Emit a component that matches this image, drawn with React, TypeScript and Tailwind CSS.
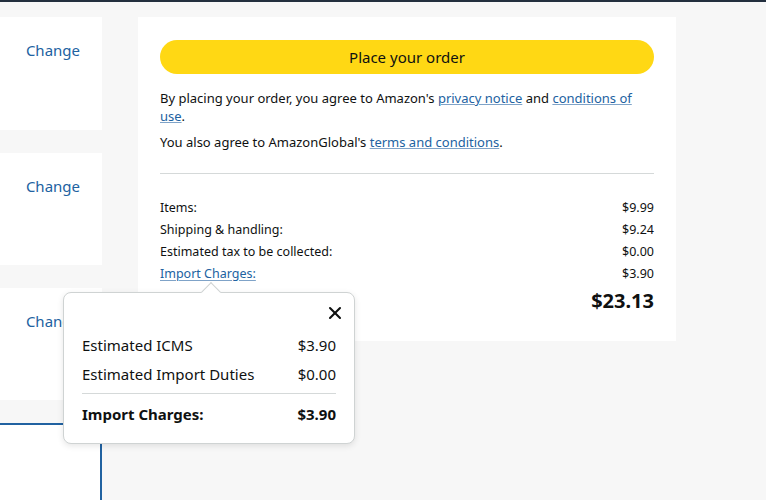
import { X } from "lucide-react";

const FONT = { fontFamily: '"Noto Sans", Arial, sans-serif' };
const LINK = "text-[#2162a1] underline decoration-[#7fa3c8]";

function ChangeCard({ tall }: { tall?: boolean }) {
  return (
    <div className={`bg-white flex justify-end pr-[22px] pt-[23px] ${tall ? "h-[113px]" : "h-[112px]"}`}>
      <a className="text-[15px] leading-[20px] text-[#2162a1]">Change</a>
    </div>
  );
}

function SummaryRow({ label, value, link }: { label: string; value: string; link?: boolean }) {
  return (
    <div className="flex justify-between text-[12.5px] leading-[22px]">
      {link ? (
        <span className="text-[#2162a1] underline underline-offset-2 decoration-[#7fa3c8]">{label}</span>
      ) : (
        <span>{label}</span>
      )}
      <span>{value}</span>
    </div>
  );
}

export default function App() {
  return (
    <div className="relative w-[766px] h-[500px] overflow-hidden bg-[#f7f7f7] text-[#0f1111]" style={FONT}>
      <div className="h-[2px] bg-[#232f3e]" />
      <div className="flex gap-[36px] pt-[15px]">
        {/* left column */}
        <div className="w-[102px] flex flex-col gap-[23px] shrink-0">
          <ChangeCard tall />
          <ChangeCard />
          <ChangeCard />
          <div className="bg-white h-[100px] border-t-2 border-r-2 border-[#2162a1]" />
        </div>

        {/* order summary */}
        <div className="w-[538px] h-[324px] bg-white px-[22px] pt-[23px]">
          <button className="w-full h-[34px] rounded-full bg-[#ffd814] text-[15px]">Place your order</button>
          <div className="mt-[15px] text-[13px] leading-[18px]">
            <div>
              By placing your order, you agree to Amazon's <a className={LINK}>privacy notice</a> and{" "}
              <a className={LINK}>conditions of</a>
            </div>
            <div>
              <a className={LINK}>use</a>.
            </div>
          </div>
          <p className="mt-[8px] text-[13px] leading-[18px]">
            You also agree to AmazonGlobal's <a className={LINK}>terms and conditions</a>.
          </p>
          <div className="mt-[22px] border-t border-[#d5d9d9]" />
          <div className="mt-[23px]">
            <SummaryRow label="Items:" value="$9.99" />
            <SummaryRow label="Shipping & handling:" value="$9.24" />
            <SummaryRow label="Estimated tax to be collected:" value="$0.00" />
            <SummaryRow label="Import Charges:" value="$3.90" link />
          </div>
          <div className="flex justify-between items-center mt-[3px] text-[20px] font-bold leading-[26px]">
            <span>Order total:</span>
            <span>$23.13</span>
          </div>
        </div>
      </div>

      {/* import charges popover */}
      <div className="absolute left-[63px] top-[292px] w-[292px] bg-white border border-[#cfd3d3] rounded-[8px] shadow-[0_2px_6px_rgba(0,0,0,0.10)] px-[18px] pt-[10px] pb-[14px]">
        <div className="absolute left-[140px] -top-[8px] w-[14px] h-[14px] bg-white border-l border-t border-[#cfd3d3] rotate-45" />
        <div className="flex justify-end -mr-[9px]">
          <X size={20} strokeWidth={2.5} className="text-[#0f1111]" />
        </div>
        <div className="mt-[8px] text-[15px] leading-[29px]">
          <div className="flex justify-between">
            <span>Estimated ICMS</span>
            <span>$3.90</span>
          </div>
          <div className="flex justify-between">
            <span>Estimated Import Duties</span>
            <span>$0.00</span>
          </div>
        </div>
        <div className="mt-[4px] border-t border-[#d5d9d9]" />
        <div className="mt-[6px] flex justify-between text-[15px] leading-[29px] font-bold">
          <span>Import Charges:</span>
          <span>$3.90</span>
        </div>
      </div>
    </div>
  );
}
